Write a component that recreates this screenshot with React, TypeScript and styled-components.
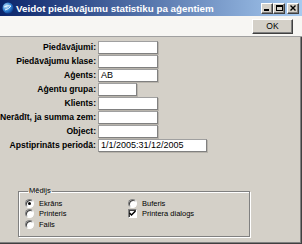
import React from "react";
import styled, { createGlobalStyle } from "styled-components";

const GlobalStyle = createGlobalStyle`
  html, body {
    margin: 0;
    padding: 0;
    background: #d4d0c8;
  }
`;

const Window = styled.div`
  width: 302px;
  height: 244px;
  box-sizing: border-box;
  display: flex;
  flex-direction: column;
  background: #d4d0c8;
  font-family: "Liberation Sans", Arial, sans-serif;
  box-shadow: inset -1px -1px 0 #404040, inset -2px -2px 0 #808080;
  overflow: hidden;
`;

const TitleBar = styled.div`
  height: 16px;
  flex: none;
  display: flex;
  align-items: center;
  padding: 0 3px 0 2px;
  background: linear-gradient(to right, #0a246a, #a6caf0);
`;

const TitleText = styled.span`
  flex: 1;
  margin-left: 2px;
  color: #fff;
  font-weight: bold;
  font-size: 9.8px;
  white-space: nowrap;
`;

const Caption = styled.div`
  display: flex;
`;

const CaptionButton = styled.div<{ $gap?: boolean }>`
  width: 12px;
  height: 11px;
  margin-left: ${(p) => (p.$gap ? "2px" : "0")};
  box-sizing: border-box;
  background: #d4d0c8;
  border: 1px solid;
  border-color: #fff #404040 #404040 #fff;
  box-shadow: inset -1px -1px 0 #808080;
  display: flex;
  align-items: center;
  justify-content: center;
`;

const Toolbar = styled.div`
  height: 20px;
  flex: none;
  display: flex;
  align-items: center;
  justify-content: flex-end;
  padding-right: 9px;
  background: #f7f6f3;
  border-bottom: 1px solid #a0a0a0;
`;

const Button = styled.button`
  width: 41px;
  height: 15px;
  padding: 0;
  background: #d4d0c8;
  border: 1px solid;
  border-color: #fff #404040 #404040 #fff;
  box-shadow: inset -1px -1px 0 #808080;
  font-family: "Liberation Sans", Arial, sans-serif;
  font-size: 8.5px;
  color: #000;
`;

const Form = styled.div`
  display: grid;
  grid-template-columns: 96px auto;
  grid-auto-rows: 13px;
  row-gap: 1px;
  column-gap: 2px;
  padding-top: 4px;
`;

const Label = styled.label`
  text-align: right;
  font-weight: bold;
  font-size: 8.6px;
  line-height: 13px;
  color: #000;
  white-space: nowrap;
`;

const Field = styled.div<{ $w: number }>`
  width: ${(p) => p.$w}px;
  height: 13px;
  box-sizing: border-box;
  background: #fff;
  border: 1px solid;
  border-color: #a0a0a0 #808080 #808080 #a0a0a0;
  box-shadow: 1px 1px 0 #b8b4ac;
  font-size: 9px;
  line-height: 11px;
  padding-left: 2px;
  color: #000;
  white-space: nowrap;
  overflow: hidden;
`;

const GroupBox = styled.fieldset`
  margin: 35px 0 0 18px;
  width: 232px;
  height: 50px;
  box-sizing: border-box;
  padding: 3px 0 0 6px;
  border: 1px solid #808080;
  box-shadow: inset 1px 1px 0 #fff, 1px 1px 0 #fff;
  display: grid;
  grid-template-columns: 103px auto;
  grid-template-rows: repeat(3, 10.5px);
  grid-auto-flow: column;
`;

const Legend = styled.legend`
  font-size: 7.5px;
  line-height: 8px;
  padding: 0 1px;
  margin-left: 3px;
  color: #000;
`;

const Option = styled.div`
  display: flex;
  align-items: center;
  gap: 2px;
  font-size: 7.5px;
  color: #000;
  white-space: nowrap;
`;

const Radio = styled.span<{ $on?: boolean }>`
  width: 9px;
  height: 9px;
  box-sizing: border-box;
  border-radius: 50%;
  background: #fff;
  border: 1px solid;
  border-color: #808080 #fff #fff #808080;
  box-shadow: inset 1px 1px 0 #404040;
  display: flex;
  align-items: center;
  justify-content: center;
  margin-right: 3px;
  &::after {
    content: "";
    width: 3px;
    height: 3px;
    border-radius: 50%;
    background: ${(p) => (p.$on ? "#000" : "transparent")};
  }
`;

const Check = styled.span`
  width: 9px;
  height: 9px;
  box-sizing: border-box;
  background: #fff;
  border: 1px solid;
  border-color: #808080 #fff #fff #808080;
  box-shadow: inset 1px 1px 0 #404040;
  display: flex;
  align-items: center;
  justify-content: center;
  margin-right: 3px;
`;

const rows: [string, number, string?][] = [
  ["Piedāvājumi:", 60],
  ["Piedāvājumu klase:", 60],
  ["Aģents:", 60, "AB"],
  ["Aģentu grupa:", 39],
  ["Klients:", 60],
  ["Nerādīt, ja summa zem:", 60],
  ["Object:", 60],
  ["Apstiprināts periodā:", 109, "1/1/2005:31/12/2005"],
];

export default function App() {
  return (
    <>
      <GlobalStyle />
      <Window>
        <TitleBar>
          <svg width="12" height="12" viewBox="0 0 12 12">
            <defs>
              <radialGradient id="g" cx="0.35" cy="0.35" r="0.7">
                <stop offset="0" stopColor="#bfe4ff" />
                <stop offset="0.6" stopColor="#2f7fd0" />
                <stop offset="1" stopColor="#0b3c8c" />
              </radialGradient>
            </defs>
            <circle cx="6" cy="6" r="5.5" fill="url(#g)" />
            <path d="M2 5 Q5 3 9 4 Q7 7 3 8" fill="none" stroke="#e8f4ff" strokeWidth="1" />
          </svg>
          <TitleText>Veidot piedāvājumu statistiku pa aģentiem</TitleText>
          <Caption>
            <CaptionButton>
              <svg width="6" height="6" viewBox="0 0 6 6">
                <rect x="0" y="4" width="5" height="2" fill="#000" />
              </svg>
            </CaptionButton>
            <CaptionButton>
              <svg width="7" height="6" viewBox="0 0 7 6">
                <rect x="0.5" y="0.5" width="6" height="5" fill="none" stroke="#000" />
                <rect x="0" y="0" width="7" height="2" fill="#000" />
              </svg>
            </CaptionButton>
            <CaptionButton $gap>
              <svg width="6" height="6" viewBox="0 0 6 6">
                <path d="M0.5 0.5 L5.5 5.5 M5.5 0.5 L0.5 5.5" stroke="#000" strokeWidth="1.4" />
              </svg>
            </CaptionButton>
          </Caption>
        </TitleBar>
        <Toolbar>
          <Button>OK</Button>
        </Toolbar>
        <Form>
          {rows.map(([label, w, value]) => (
            <React.Fragment key={label}>
              <Label>{label}</Label>
              <Field $w={w}>{value}</Field>
            </React.Fragment>
          ))}
        </Form>
        <GroupBox>
          <Legend>Mēdijs</Legend>
          <Option>
            <Radio $on />
            Ekrāns
          </Option>
          <Option>
            <Radio />
            Printeris
          </Option>
          <Option>
            <Radio />
            Fails
          </Option>
          <Option>
            <Radio />
            Buferis
          </Option>
          <Option>
            <Check>
              <svg width="7" height="7" viewBox="0 0 7 7">
                <path d="M0.5 3 L2.5 5 L6.5 1" fill="none" stroke="#000" strokeWidth="1.5" />
              </svg>
            </Check>
            Printera dialogs
          </Option>
        </GroupBox>
      </Window>
    </>
  );
}
